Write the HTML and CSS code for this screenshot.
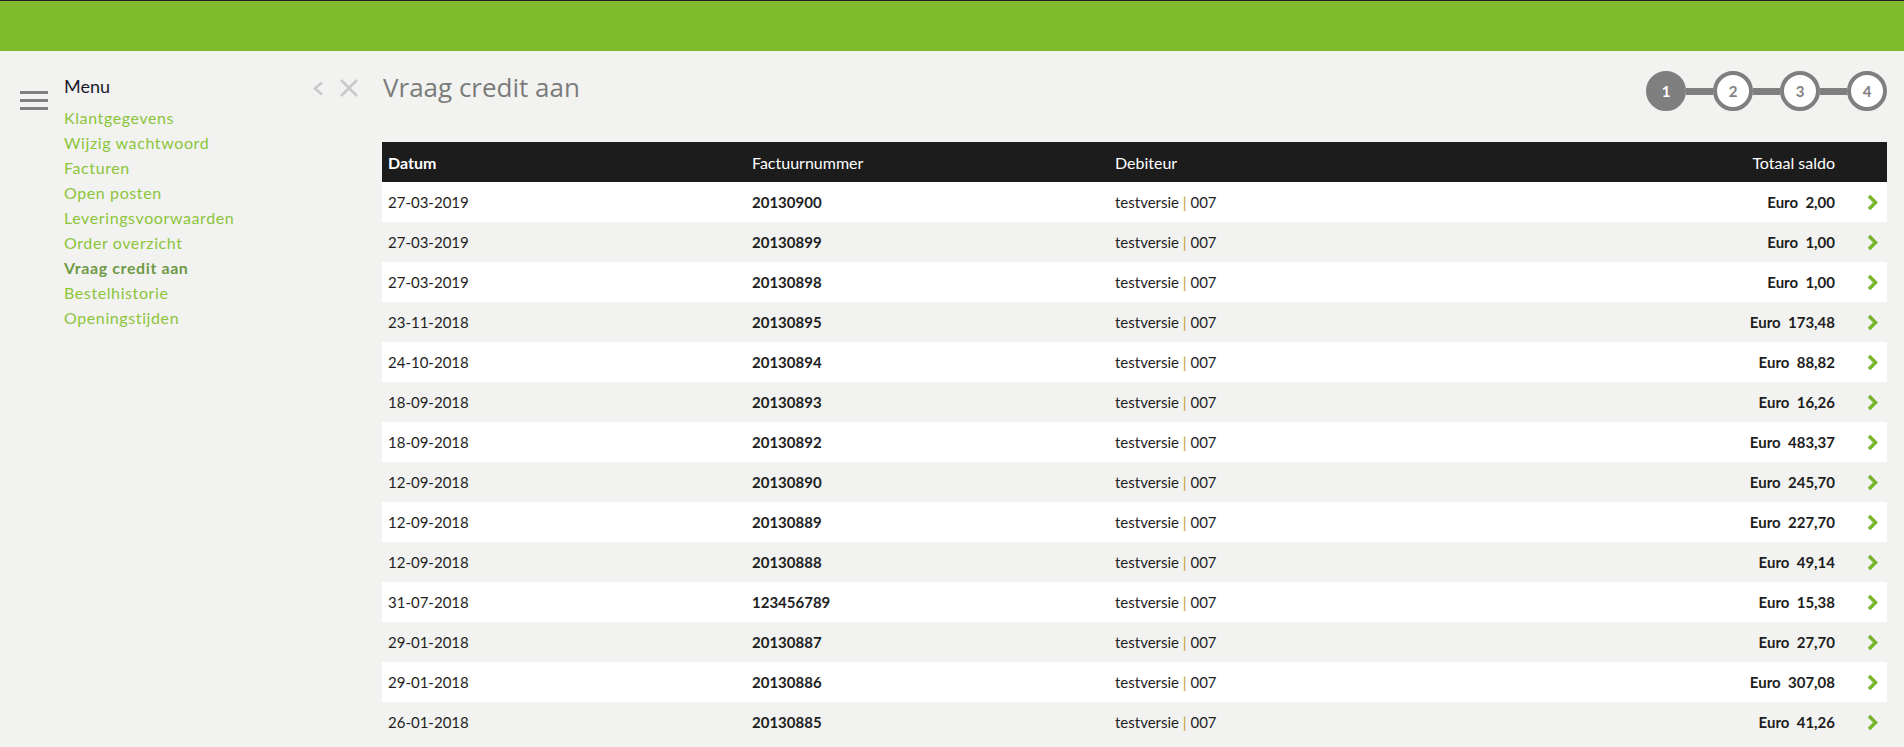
FILE: index.html
```html
<!DOCTYPE html>
<html lang="nl">
<head>
<meta charset="utf-8">
<title>Vraag credit aan</title>
<link rel="stylesheet" href="styles.css">
</head>
<body>
<header class="topbar"></header>
<div class="main">
  <aside class="sidebar">
    <div class="hamburger"><span></span><span></span><span></span></div>
    <nav class="menu">
      <div class="menu-title">Menu</div>
      <a class="menu-item" href="#">Klantgegevens</a>
      <a class="menu-item" href="#">Wijzig wachtwoord</a>
      <a class="menu-item" href="#">Facturen</a>
      <a class="menu-item" href="#">Open posten</a>
      <a class="menu-item" href="#">Leveringsvoorwaarden</a>
      <a class="menu-item" href="#">Order overzicht</a>
      <a class="menu-item active" href="#">Vraag credit aan</a>
      <a class="menu-item" href="#">Bestelhistorie</a>
      <a class="menu-item" href="#">Openingstijden</a>
    </nav>
  </aside>
  <section class="content">
    <div class="titlebar">
      <div class="title-left">
        <svg class="ico-back" width="12" height="15" viewBox="0 0 12 15"><polyline points="10,1.5 3,7.5 10,13.5" fill="none" stroke="#c9c9c9" stroke-width="2.6"/></svg>
        <svg class="ico-close" width="20" height="20" viewBox="0 0 20 20"><path d="M2 2 L18 18 M18 2 L2 18" stroke="#c9c9c9" stroke-width="2.6" fill="none"/></svg>
        <h1 class="title">Vraag credit aan</h1>
      </div>
      <div class="steps">
        <span class="step current">1</span><span class="step-line"></span>
        <span class="step">2</span><span class="step-line"></span>
        <span class="step">3</span><span class="step-line"></span>
        <span class="step">4</span>
      </div>
    </div>
    <table class="grid">
      <thead>
        <tr><th class="c-date">Datum</th><th class="c-nr">Factuurnummer</th><th class="c-deb">Debiteur</th><th class="c-sum">Totaal saldo</th><th class="c-go"></th></tr>
      </thead>
      <tbody>
        <tr><td>27-03-2019</td><td class="b">20130900</td><td>testversie <span class="pipe">|</span> 007</td><td class="c-sum b">Euro&nbsp;&nbsp;2,00</td><td class="c-go"><svg class="chev" width="11" height="17" viewBox="0 0 11 17"><polyline points="2,2 8.5,8.5 2,15" fill="none" stroke="#7ab52e" stroke-width="3.6"/></svg></td></tr>
        <tr><td>27-03-2019</td><td class="b">20130899</td><td>testversie <span class="pipe">|</span> 007</td><td class="c-sum b">Euro&nbsp;&nbsp;1,00</td><td class="c-go"><svg class="chev" width="11" height="17" viewBox="0 0 11 17"><polyline points="2,2 8.5,8.5 2,15" fill="none" stroke="#7ab52e" stroke-width="3.6"/></svg></td></tr>
        <tr><td>27-03-2019</td><td class="b">20130898</td><td>testversie <span class="pipe">|</span> 007</td><td class="c-sum b">Euro&nbsp;&nbsp;1,00</td><td class="c-go"><svg class="chev" width="11" height="17" viewBox="0 0 11 17"><polyline points="2,2 8.5,8.5 2,15" fill="none" stroke="#7ab52e" stroke-width="3.6"/></svg></td></tr>
        <tr><td>23-11-2018</td><td class="b">20130895</td><td>testversie <span class="pipe">|</span> 007</td><td class="c-sum b">Euro&nbsp;&nbsp;173,48</td><td class="c-go"><svg class="chev" width="11" height="17" viewBox="0 0 11 17"><polyline points="2,2 8.5,8.5 2,15" fill="none" stroke="#7ab52e" stroke-width="3.6"/></svg></td></tr>
        <tr><td>24-10-2018</td><td class="b">20130894</td><td>testversie <span class="pipe">|</span> 007</td><td class="c-sum b">Euro&nbsp;&nbsp;88,82</td><td class="c-go"><svg class="chev" width="11" height="17" viewBox="0 0 11 17"><polyline points="2,2 8.5,8.5 2,15" fill="none" stroke="#7ab52e" stroke-width="3.6"/></svg></td></tr>
        <tr><td>18-09-2018</td><td class="b">20130893</td><td>testversie <span class="pipe">|</span> 007</td><td class="c-sum b">Euro&nbsp;&nbsp;16,26</td><td class="c-go"><svg class="chev" width="11" height="17" viewBox="0 0 11 17"><polyline points="2,2 8.5,8.5 2,15" fill="none" stroke="#7ab52e" stroke-width="3.6"/></svg></td></tr>
        <tr><td>18-09-2018</td><td class="b">20130892</td><td>testversie <span class="pipe">|</span> 007</td><td class="c-sum b">Euro&nbsp;&nbsp;483,37</td><td class="c-go"><svg class="chev" width="11" height="17" viewBox="0 0 11 17"><polyline points="2,2 8.5,8.5 2,15" fill="none" stroke="#7ab52e" stroke-width="3.6"/></svg></td></tr>
        <tr><td>12-09-2018</td><td class="b">20130890</td><td>testversie <span class="pipe">|</span> 007</td><td class="c-sum b">Euro&nbsp;&nbsp;245,70</td><td class="c-go"><svg class="chev" width="11" height="17" viewBox="0 0 11 17"><polyline points="2,2 8.5,8.5 2,15" fill="none" stroke="#7ab52e" stroke-width="3.6"/></svg></td></tr>
        <tr><td>12-09-2018</td><td class="b">20130889</td><td>testversie <span class="pipe">|</span> 007</td><td class="c-sum b">Euro&nbsp;&nbsp;227,70</td><td class="c-go"><svg class="chev" width="11" height="17" viewBox="0 0 11 17"><polyline points="2,2 8.5,8.5 2,15" fill="none" stroke="#7ab52e" stroke-width="3.6"/></svg></td></tr>
        <tr><td>12-09-2018</td><td class="b">20130888</td><td>testversie <span class="pipe">|</span> 007</td><td class="c-sum b">Euro&nbsp;&nbsp;49,14</td><td class="c-go"><svg class="chev" width="11" height="17" viewBox="0 0 11 17"><polyline points="2,2 8.5,8.5 2,15" fill="none" stroke="#7ab52e" stroke-width="3.6"/></svg></td></tr>
        <tr><td>31-07-2018</td><td class="b">123456789</td><td>testversie <span class="pipe">|</span> 007</td><td class="c-sum b">Euro&nbsp;&nbsp;15,38</td><td class="c-go"><svg class="chev" width="11" height="17" viewBox="0 0 11 17"><polyline points="2,2 8.5,8.5 2,15" fill="none" stroke="#7ab52e" stroke-width="3.6"/></svg></td></tr>
        <tr><td>29-01-2018</td><td class="b">20130887</td><td>testversie <span class="pipe">|</span> 007</td><td class="c-sum b">Euro&nbsp;&nbsp;27,70</td><td class="c-go"><svg class="chev" width="11" height="17" viewBox="0 0 11 17"><polyline points="2,2 8.5,8.5 2,15" fill="none" stroke="#7ab52e" stroke-width="3.6"/></svg></td></tr>
        <tr><td>29-01-2018</td><td class="b">20130886</td><td>testversie <span class="pipe">|</span> 007</td><td class="c-sum b">Euro&nbsp;&nbsp;307,08</td><td class="c-go"><svg class="chev" width="11" height="17" viewBox="0 0 11 17"><polyline points="2,2 8.5,8.5 2,15" fill="none" stroke="#7ab52e" stroke-width="3.6"/></svg></td></tr>
        <tr><td>26-01-2018</td><td class="b">20130885</td><td>testversie <span class="pipe">|</span> 007</td><td class="c-sum b">Euro&nbsp;&nbsp;41,26</td><td class="c-go"><svg class="chev" width="11" height="17" viewBox="0 0 11 17"><polyline points="2,2 8.5,8.5 2,15" fill="none" stroke="#7ab52e" stroke-width="3.6"/></svg></td></tr>
      </tbody>
    </table>
  </section>
</div>
</body>
</html>
```
FILE: styles.css
```css
html, body {
  margin: 0;
  padding: 0;
  background: #f2f3f1;
  font-family: "Lato", "Open Sans", sans-serif;
  color: #1e1e1e;
  overflow: hidden;
}
.topbar {
  height: 50px;
  border-top: 1px solid #1f1f1f;
  background: #80bb2e;
}
.main {
  display: flex;
  align-items: flex-start;
}
.sidebar {
  width: 312px;
  flex: none;
  display: flex;
  align-items: flex-start;
}
.hamburger {
  margin: 40px 16px 0 20px;
  width: 28px;
  display: flex;
  flex-direction: column;
  gap: 5px;
}
.hamburger span {
  display: block;
  height: 3px;
  background: #7f7f7f;
}
.menu {
  display: flex;
  flex-direction: column;
  padding-top: 23px;
}
.menu-title {
  font-size: 18px;
  line-height: 25px;
  color: #1a1a2a;
  margin-bottom: 6px;
}
.menu-item {
  font-size: 16px;
  line-height: 25px;
  color: #8cc43a;
  text-decoration: none;
  letter-spacing: 0.6px;
}
.menu-item.active {
  font-weight: 700;
  color: #6f9a45;
}
.content {
  flex: 1;
  padding-right: 17px;
}
.titlebar {
  display: flex;
  justify-content: space-between;
  align-items: flex-start;
  padding-top: 20px;
  height: 91px;
  box-sizing: border-box;
}
.title-left {
  display: flex;
  align-items: center;
  height: 32px;
}
.ico-back {
  margin-top: 2px;
}
.ico-close {
  margin-left: 15px;
  margin-top: 1px;
}
.title {
  margin: 0 0 0 24px;
  font-family: "Open Sans", sans-serif;
  font-weight: 400;
  font-size: 26px;
  color: #7b7b7b;
  line-height: 32px;
}
.steps {
  display: flex;
  align-items: center;
}
.step {
  width: 40px;
  height: 40px;
  box-sizing: border-box;
  border: 4px solid #7f7f7f;
  border-radius: 50%;
  background: #fff;
  color: #7f7f7f;
  font-weight: 700;
  font-size: 15px;
  display: flex;
  align-items: center;
  justify-content: center;
}
.step.current {
  background: #7f7f7f;
  color: #fff;
}
.step-line {
  width: 27px;
  height: 7px;
  background: #7f7f7f;
}
.grid {
  margin-left: 70px;
  width: calc(100% - 70px);
  border-collapse: collapse;
  table-layout: fixed;
  font-size: 15px;
}
.grid th, .grid td {
  height: 40px;
  padding: 0 6px;
  text-align: left;
  white-space: nowrap;
}
.grid thead tr {
  background: #1c1c1c;
  color: #fff;
}
.grid th {
  font-weight: 400;
  font-size: 16px;
}
.grid th.c-date {
  font-weight: 700;
  width: 352px;
}
.grid th.c-nr {
  width: 351px;
}
.grid th.c-deb {
  width: 353px;
}
.grid .c-sum {
  text-align: right;
}
.grid th.c-go {
  width: 34px;
}
.grid tbody tr:nth-child(odd) {
  background: #ffffff;
}
.grid tbody tr:nth-child(even) {
  background: #f2f3f1;
}
.b {
  font-weight: 700;
}
.pipe {
  color: #c49a3c;
}
.chev {
  display: block;
  margin-left: 20px;
}
```
